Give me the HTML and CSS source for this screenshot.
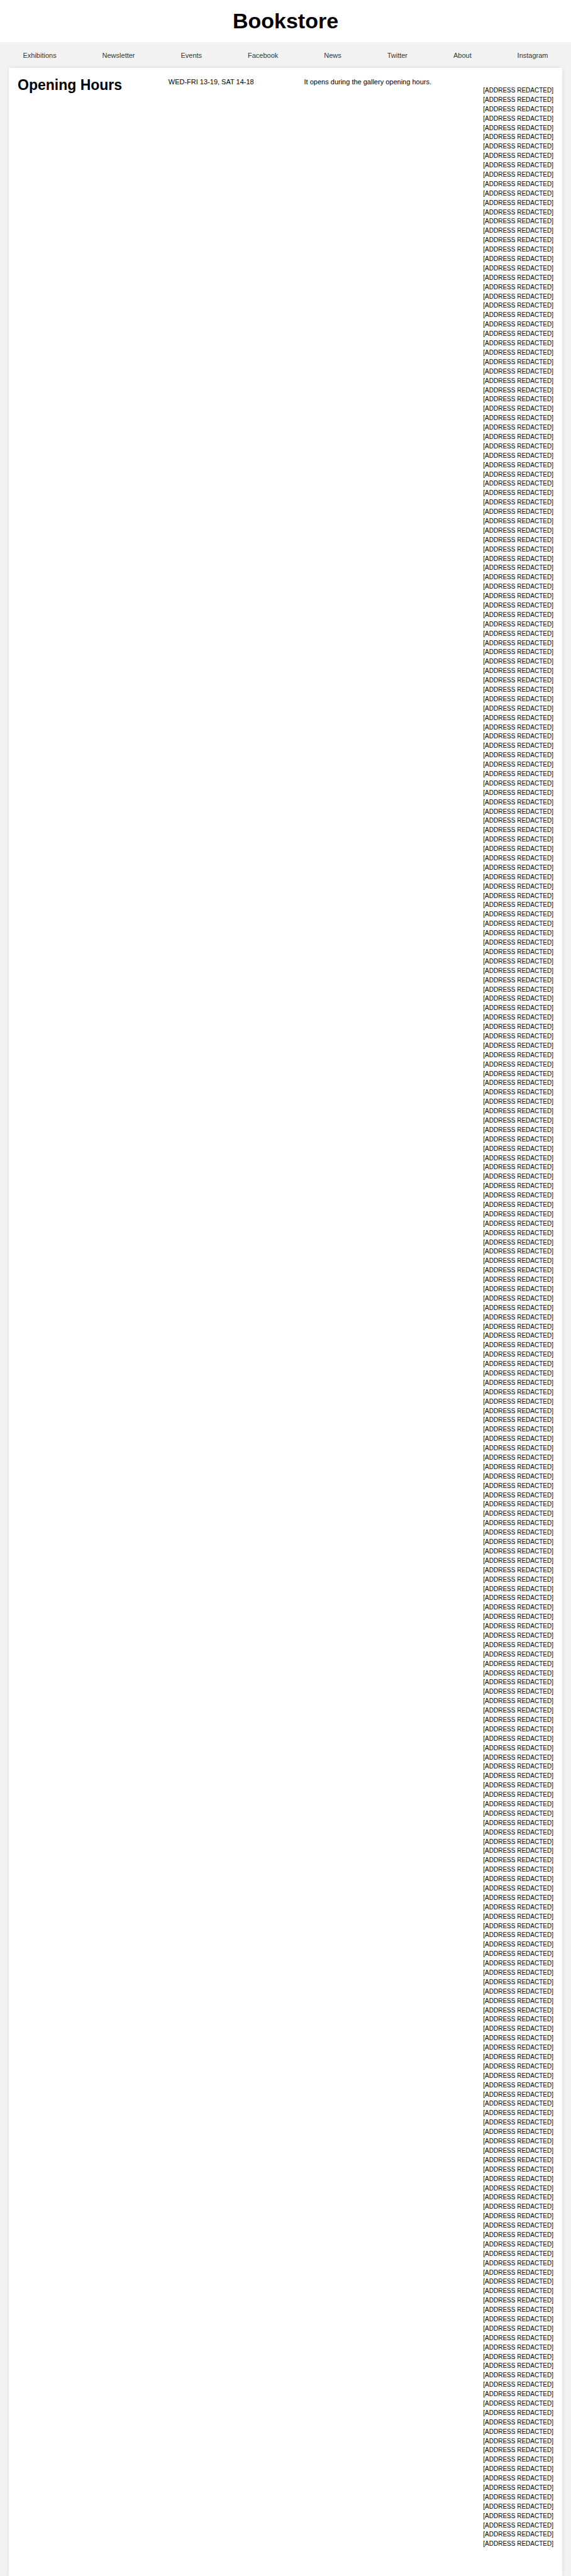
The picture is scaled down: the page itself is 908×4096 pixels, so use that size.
FILE: index.html
```html
<!DOCTYPE html>
<html lang="en">
<head>
<meta charset="utf-8">
<meta name="viewport" content="width=device-width, initial-scale=1">
<title>Bookstore</title>
<link rel="stylesheet" href="styles.css">
</head>
<body>
<header class="site-header">
  <h1 class="site-title">Bookstore</h1>
</header>
<nav class="site-nav" aria-label="Main">
  <a href="#exhibitions">Exhibitions</a>
  <a href="#newsletter">Newsletter</a>
  <a href="#events">Events</a>
  <a href="#facebook">Facebook</a>
  <a href="#news">News</a>
  <a href="#twitter">Twitter</a>
  <a href="#about">About</a>
  <a href="#instagram">Instagram</a>
</nav>
<main class="card">
  <h2 class="card-title">Opening Hours</h2>
  <p class="card-text">WED-FRI 13-19, SAT 14-18</p>
  <p class="card-text">It opens during the gallery opening hours.</p>
  <ul class="addresses" id="addresses"></ul>
</main>
<script src="addresses.js"></script>
</body>
</html>
```
FILE: styles.css
```css
* {
  box-sizing: border-box;
}

body {
  display: flex;
  flex-direction: column;
  min-height: 100vh;
  margin: 0;
  background: #f3f3f3;
  color: #000;
  font-family: "Liberation Sans", Arial, sans-serif;
  font-size: 11px;
  line-height: 16px;
}

.site-header {
  padding: 14px;
  background: #fff;
  text-align: center;
}

.site-title {
  margin: 0;
  font-size: 34px;
  line-height: 39px;
}

.site-nav {
  display: flex;
  justify-content: space-around;
  padding: 13px 0 12px;
}

.site-nav a {
  color: #333;
  text-decoration: none;
}

.card {
  display: grid;
  flex: 1;
  grid-template-columns: 240fr 216fr 285fr 111fr;
  margin: 0 14px;
  padding: 14px;
  background: #fff;
  box-shadow: 0 0 7px rgba(0, 0, 0, 0.1);
}

.card-title {
  margin: 0;
  font-size: 23px;
  line-height: 26px;
  white-space: nowrap;
}

.card-text {
  margin: 0;
}

.addresses {
  display: flex;
  flex-direction: column;
  justify-content: space-between;
  margin: 0;
  padding: 15px 0 27px;
  list-style: none;
  font-size: 10px;
  line-height: 14px;
  text-align: right;
  white-space: nowrap;
}
```
FILE: addresses.js
```js
const list = document.getElementById("addresses");
const ADDRESS_COUNT = 263;

for (let i = 0; i < ADDRESS_COUNT; i += 1) {
  const item = document.createElement("li");
  item.textContent = "[ADDRESS REDACTED]";
  list.append(item);
}
```
